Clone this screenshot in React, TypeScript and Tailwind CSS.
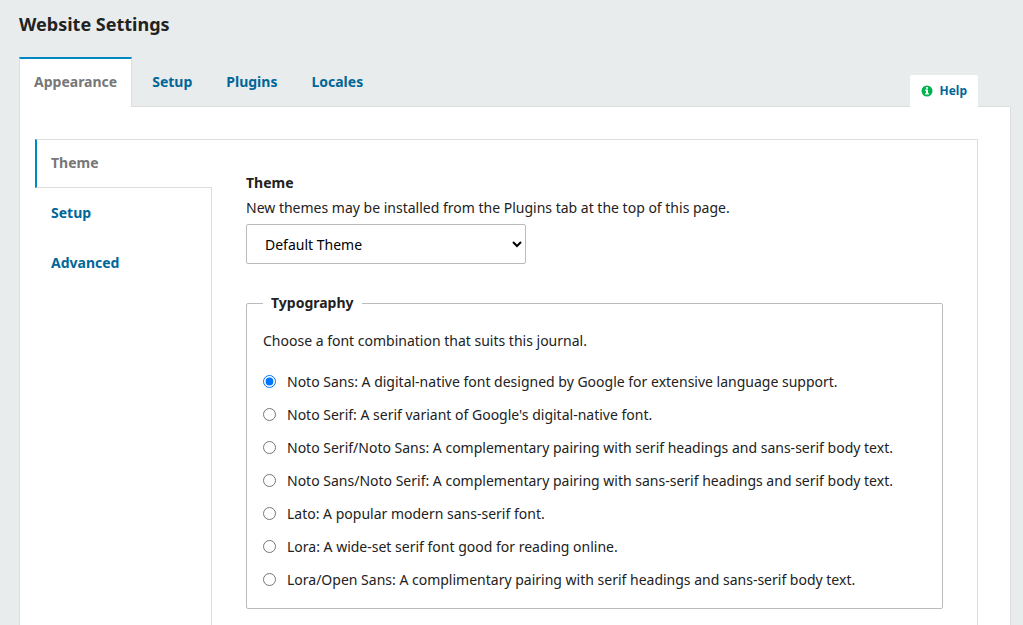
import { useState } from "react";

const tabs = ["Setup", "Plugins", "Locales"];
const sideTabs = ["Setup", "Advanced"];

const fonts = [
  "Noto Sans: A digital-native font designed by Google for extensive language support.",
  "Noto Serif: A serif variant of Google's digital-native font.",
  "Noto Serif/Noto Sans: A complementary pairing with serif headings and sans-serif body text.",
  "Noto Sans/Noto Serif: A complementary pairing with sans-serif headings and serif body text.",
  "Lato: A popular modern sans-serif font.",
  "Lora: A wide-set serif font good for reading online.",
  "Lora/Open Sans: A complimentary pairing with serif headings and sans-serif body text.",
];

function InfoIcon() {
  return (
    <svg viewBox="0 0 12 12" className="size-3" aria-hidden="true">
      <circle cx="6" cy="6" r="5.5" fill="#00b24e" />
      <path d="M5 2h2v1.7H5zM4.2 4.6H7v3.5h.8v1.4H4.2V8.1H5V6h-.8z" fill="#fff" />
    </svg>
  );
}

function ThemePanel() {
  const [font, setFont] = useState(0);
  return (
    <section className="min-w-0 flex-1 border-t border-r border-l border-[#ddd] pt-8 pr-[34px] pb-4 pl-[34px]">
      <label htmlFor="theme" className="block leading-[22px] font-bold">
        Theme
      </label>
      <p id="theme-help" className="mt-0.5 leading-6">
        New themes may be installed from the Plugins tab at the top of this page.
      </p>
      <select
        id="theme"
        aria-describedby="theme-help"
        className="mt-1 block h-10 w-[280px] rounded-xs border border-[#bbb] bg-white pl-3.5 text-black"
      >
        <option>Default Theme</option>
      </select>

      <fieldset className="mt-7 rounded-xs border border-[#bbb] px-4 pb-3">
        <legend className="px-2 leading-[22px] font-bold">Typography</legend>
        <p className="mt-[15px] mb-3 leading-6">Choose a font combination that suits this journal.</p>
        {fonts.map((label, index) => (
          <label key={label} className="flex h-[33px] items-center gap-[11px]">
            <input
              type="radio"
              name="typography"
              checked={font === index}
              onChange={() => setFont(index)}
              className="size-[13px] shrink-0"
            />
            <span>{label}</span>
          </label>
        ))}
      </fieldset>
    </section>
  );
}

export default function App() {
  return (
    <main className="flex min-h-screen flex-col bg-[#e9eced] pr-3 pl-[19px] font-['Noto_Sans',sans-serif] text-sm text-[#222]">
      <h1 className="pt-3 text-lg leading-6 font-bold">Website Settings</h1>

      <div className="mt-[21px] flex">
        <div role="tablist" className="flex gap-1.5">
          <button
            type="button"
            role="tab"
            aria-selected="true"
            className="relative -mb-px h-[50px] border-x border-t-2 border-x-[#ddd] border-t-[#0088c2] bg-white px-3.5 pb-0.5 font-bold text-[#777]"
          >
            Appearance
          </button>
          {tabs.map((tab) => (
            <button
              key={tab}
              type="button"
              role="tab"
              aria-selected="false"
              className="h-[49px] px-3.5 font-bold text-[#006798]"
            >
              {tab}
            </button>
          ))}
        </div>
        <button
          type="button"
          className="relative mr-[33px] -mb-px ml-auto flex h-8 items-center gap-1.5 self-end rounded-t-xs bg-white px-[11px] text-xs font-bold text-[#006798]"
        >
          <InfoIcon />
          Help
        </button>
      </div>

      <div className="flex flex-1 rounded-tr-xs border-x border-t border-[#ddd] bg-white pt-8 pr-8 pl-[15px]">
        <div role="tablist" aria-orientation="vertical" className="-mr-px flex w-[177px] shrink-0 flex-col">
          <button
            type="button"
            role="tab"
            aria-selected="true"
            className="relative h-[49px] border-y border-l-2 border-y-[#ddd] border-l-[#0088c2] bg-white pb-0.5 pl-3.5 text-left font-bold text-[#777]"
          >
            Theme
          </button>
          {sideTabs.map((tab) => (
            <button
              key={tab}
              type="button"
              role="tab"
              aria-selected="false"
              className="h-[50px] pl-4 text-left font-bold text-[#006798]"
            >
              {tab}
            </button>
          ))}
        </div>
        <ThemePanel />
      </div>
    </main>
  );
}
